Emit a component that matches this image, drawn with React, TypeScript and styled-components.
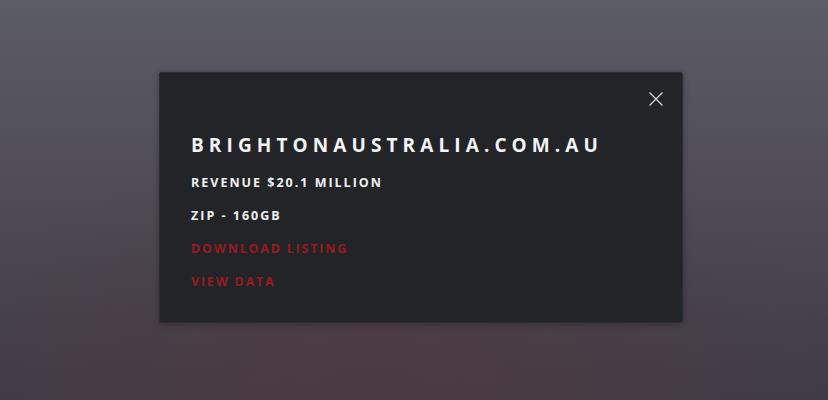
import styled, { createGlobalStyle } from "styled-components";

const GlobalStyle = createGlobalStyle`
  html, body {
    margin: 0;
    padding: 0;
  }
  body {
    font-family: "Open Sans", "Noto Sans", sans-serif;
  }
`;

const Backdrop = styled.div`
  width: 828px;
  height: 400px;
  display: flex;
  justify-content: flex-start;
  align-items: flex-start;
  padding: 72px 0 0 159px;
  box-sizing: border-box;
  background:
    radial-gradient(ellipse 60% 55% at 45% 95%, rgba(78, 58, 66, 0.9), rgba(78, 58, 66, 0) 100%),
    linear-gradient(180deg, #5c5c66 0%, #504d57 45%, #3e3b46 100%);
`;

const Card = styled.div`
  position: relative;
  width: 524px;
  height: 251px;
  box-sizing: border-box;
  padding: 61px 31px 0;
  background: #232428;
  border: 1px solid #2c2d32;
  border-radius: 2px;
  box-shadow: 0 1px 6px rgba(0, 0, 0, 0.3);
  display: flex;
  flex-direction: column;
`;

const Close = styled.button`
  position: absolute;
  top: 18px;
  right: 18px;
  width: 16px;
  height: 16px;
  padding: 0;
  border: none;
  background: none;
  cursor: pointer;
  display: flex;
`;

const Title = styled.h1`
  margin: 0 0 19px;
  font-size: 19px;
  line-height: 22px;
  font-weight: 700;
  letter-spacing: 5.1px;
  color: #f4f4f4;
`;

const Line = styled.div<{ $accent?: boolean }>`
  font-size: 12.5px;
  line-height: 16px;
  font-weight: 700;
  letter-spacing: ${(p) => (p.$accent ? "1.8px" : "2px")};
  color: ${(p) => (p.$accent ? "#961c21" : "#f2f2f2")};
  margin-bottom: 17px;
  cursor: ${(p) => (p.$accent ? "pointer" : "default")};
`;

export default function App() {
  return (
    <>
      <GlobalStyle />
      <Backdrop>
        <Card>
          <Close aria-label="Close">
            <svg width="16" height="16" viewBox="0 0 16 16">
              <path d="M1.5 1.5 L14.5 14.5 M14.5 1.5 L1.5 14.5" stroke="#d8d8d8" strokeWidth="1.2" />
            </svg>
          </Close>
          <Title>BRIGHTONAUSTRALIA.COM.AU</Title>
          <Line>REVENUE $20.1 MILLION</Line>
          <Line>ZIP - 160GB</Line>
          <Line $accent>DOWNLOAD LISTING</Line>
          <Line $accent>VIEW DATA</Line>
        </Card>
      </Backdrop>
    </>
  );
}
